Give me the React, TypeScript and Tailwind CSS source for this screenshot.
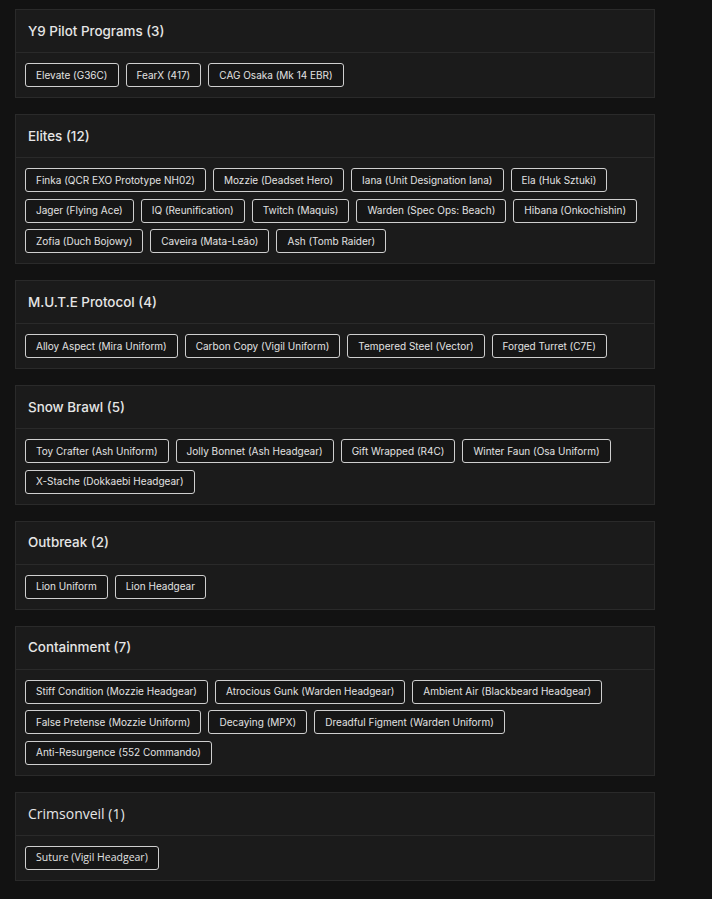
const sections: { title: string; items: string[]; alt?: boolean }[] = [
  {
    title: "Y9 Pilot Programs (3)",
    items: ["Elevate (G36C)", "FearX (417)", "CAG Osaka (Mk 14 EBR)"],
  },
  {
    title: "Elites (12)",
    items: [
      "Finka (QCR EXO Prototype NH02)",
      "Mozzie (Deadset Hero)",
      "Iana (Unit Designation Iana)",
      "Ela (Huk Sztuki)",
      "Jager (Flying Ace)",
      "IQ (Reunification)",
      "Twitch (Maquis)",
      "Warden (Spec Ops: Beach)",
      "Hibana (Onkochishin)",
      "Zofia (Duch Bojowy)",
      "Caveira (Mata-Leão)",
      "Ash (Tomb Raider)",
    ],
  },
  {
    title: "M.U.T.E Protocol (4)",
    items: [
      "Alloy Aspect (Mira Uniform)",
      "Carbon Copy (Vigil Uniform)",
      "Tempered Steel (Vector)",
      "Forged Turret (C7E)",
    ],
  },
  {
    title: "Snow Brawl (5)",
    items: [
      "Toy Crafter (Ash Uniform)",
      "Jolly Bonnet (Ash Headgear)",
      "Gift Wrapped (R4C)",
      "Winter Faun (Osa Uniform)",
      "X-Stache (Dokkaebi Headgear)",
    ],
  },
  {
    title: "Outbreak (2)",
    items: ["Lion Uniform", "Lion Headgear"],
  },
  {
    title: "Containment (7)",
    items: [
      "Stiff Condition (Mozzie Headgear)",
      "Atrocious Gunk (Warden Headgear)",
      "Ambient Air (Blackbeard Headgear)",
      "False Pretense (Mozzie Uniform)",
      "Decaying (MPX)",
      "Dreadful Figment (Warden Uniform)",
      "Anti-Resurgence (552 Commando)",
    ],
  },
  {
    title: "Crimsonveil (1)",
    items: ["Suture (Vigil Headgear)"],
    alt: true,
  },
];

export default function App() {
  return (
    <div className="min-h-screen bg-[#121212] pt-[9px] pl-[15px] pb-4 font-['Inter',sans-serif]">
      <div className="flex w-[640px] flex-col gap-[16px]">
        {sections.map((s) => (
          <div
            key={s.title}
            className={`border border-[#2a2a2a] bg-[#1b1b1b] ${s.alt ? "font-['Open_Sans',sans-serif]" : ""}`}
          >
            {/* Header */}
            <div className="flex h-[43px] items-center border-b border-[#2a2a2a] px-3">
              <h2
                className={`font-medium text-[#e6e6e6] ${s.alt ? "text-[14px] font-normal" : "text-[13.4px]"}`}
              >
                {s.title}
              </h2>
            </div>

            {/* Items */}
            <div className="flex flex-wrap gap-x-[7px] gap-y-[6.5px] px-[9px] py-[10px]">
              {s.items.map((item) => (
                <span
                  key={item}
                  className={`flex h-[24px] items-center rounded-[3px] border border-[#cfcfcf] bg-[#161616] px-[10px] text-[#e2e2e2] ${s.alt ? "text-[10.5px]" : "text-[10px]"}`}
                >
                  {item}
                </span>
              ))}
            </div>
          </div>
        ))}
      </div>
    </div>
  );
}
